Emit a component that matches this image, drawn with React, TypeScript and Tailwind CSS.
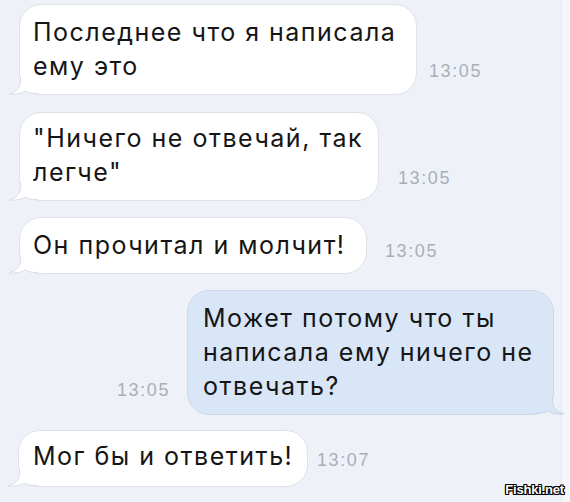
import React from "react";

const FONT = { fontFamily: 'Inter, "Liberation Sans", Arial, sans-serif' };

function Tail({ blue }: { blue?: boolean }) {
  const fill = blue ? "#d8e6f7" : "#ffffff";
  const stroke = blue ? "#c9d7e8" : "#d9dee5";
  return (
    <svg
      width="30"
      height="22"
      viewBox="0 0 30 22"
      className={
        blue
          ? "absolute right-[-12px] bottom-[-1px] -scale-x-100"
          : "absolute left-[-12px] bottom-[-1px]"
      }
    >
      <path
        d="M12.5 0 L12.5 8 C12.5 15 8 19 1 21 C9 21.5 14 20 17 18 C20 20 24 20.5 30 20.5 L30 0 Z"
        fill={fill}
      />
      <path
        d="M12.5 3 L12.5 8 C12.5 15 8 19 1 21 C9 21.5 14 20 17 18 C20 20 24 20.5 30 20.5"
        fill="none"
        stroke={stroke}
        strokeWidth="1"
      />
    </svg>
  );
}

function Time({ t, cls }: { t: string; cls: string }) {
  return (
    <span
      className={`font-['Liberation_Sans',Arial,sans-serif] text-[18px] leading-[18px] tracking-[1.6px] text-[#a9afb7] whitespace-nowrap ${cls}`}
    >
      {t}
    </span>
  );
}

export default function App() {
  return (
    <div
      className="w-[570px] h-[502px] bg-[#eef2f8] overflow-hidden relative flex"
      style={FONT}
    >
      <div className="w-[561px] flex flex-col pt-[4px] text-[25px] leading-[34px] tracking-[1.5px] text-[#151515]">
        {/* Row 1 */}
        <div className="flex items-end pl-[19px]">
          <div className="relative w-[398px] bg-white border border-[#dde2e8] rounded-[22px] pl-[13px] pt-[10px] pb-[11px]">
            <Tail />
            <span className="relative whitespace-nowrap">
              Последнее что я написала
              <br />
              ему это
            </span>
          </div>
          <Time t="13:05" cls="ml-[12px] mb-[15px]" />
        </div>

        {/* Row 2 */}
        <div className="flex items-end pl-[19px] mt-[17px]">
          <div className="relative w-[360px] bg-white border border-[#dde2e8] rounded-[22px] pl-[13px] pt-[8px] pb-[11px]">
            <Tail />
            <span className="relative whitespace-nowrap">
              "Ничего не отвечай, так
              <br />
              легче"
            </span>
          </div>
          <Time t="13:05" cls="ml-[19px] mb-[14px]" />
        </div>

        {/* Row 3 */}
        <div className="flex items-end pl-[19px] mt-[16px]">
          <div className="relative w-[348px] bg-white border border-[#dde2e8] rounded-[22px] pl-[13px] pt-[10px] pb-[11px]">
            <Tail />
            <span className="relative whitespace-nowrap">Он прочитал и молчит!</span>
          </div>
          <Time t="13:05" cls="ml-[18px] mb-[14px]" />
        </div>

        {/* Row 4 (outgoing) */}
        <div className="flex items-end justify-end pr-[7px] mt-[16px]">
          <Time t="13:05" cls="mr-[17px] mb-[16px]" />
          <div className="relative w-[367px] bg-[#d8e6f7] border border-[#cdd9e8] rounded-[22px] pl-[15px] pt-[10px] pb-[11px]">
            <Tail blue />
            <span className="relative whitespace-nowrap">
              Может потому что ты
              <br />
              написала ему ничего не
              <br />
              отвечать?
            </span>
          </div>
        </div>

        {/* Row 5 */}
        <div className="flex items-end pl-[18px] mt-[15px]">
          <div className="relative w-[290px] bg-white border border-[#dde2e8] rounded-[22px] pl-[14px] pt-[8px] pb-[13px]">
            <Tail />
            <span className="relative whitespace-nowrap">Мог бы и ответить!</span>
          </div>
          <Time t="13:07" cls="ml-[9px] mb-[18px]" />
        </div>
      </div>
      <div className="flex-1 bg-[#f3f6fb] border-l border-[#e3e8ef]" />

      <span
        className="absolute right-[6px] bottom-[6px] font-['Liberation_Sans',Arial,sans-serif] text-[13px] leading-[13px] font-bold text-white tracking-[-0.2px] [text-shadow:-1px_-1px_0_#000,1px_-1px_0_#000,-1px_1px_0_#000,1px_1px_0_#000,0_1px_0_#000,0_-1px_0_#000,1px_0_0_#000,-1px_0_0_#000]"
      >
        Fishki.net
      </span>
    </div>
  );
}
